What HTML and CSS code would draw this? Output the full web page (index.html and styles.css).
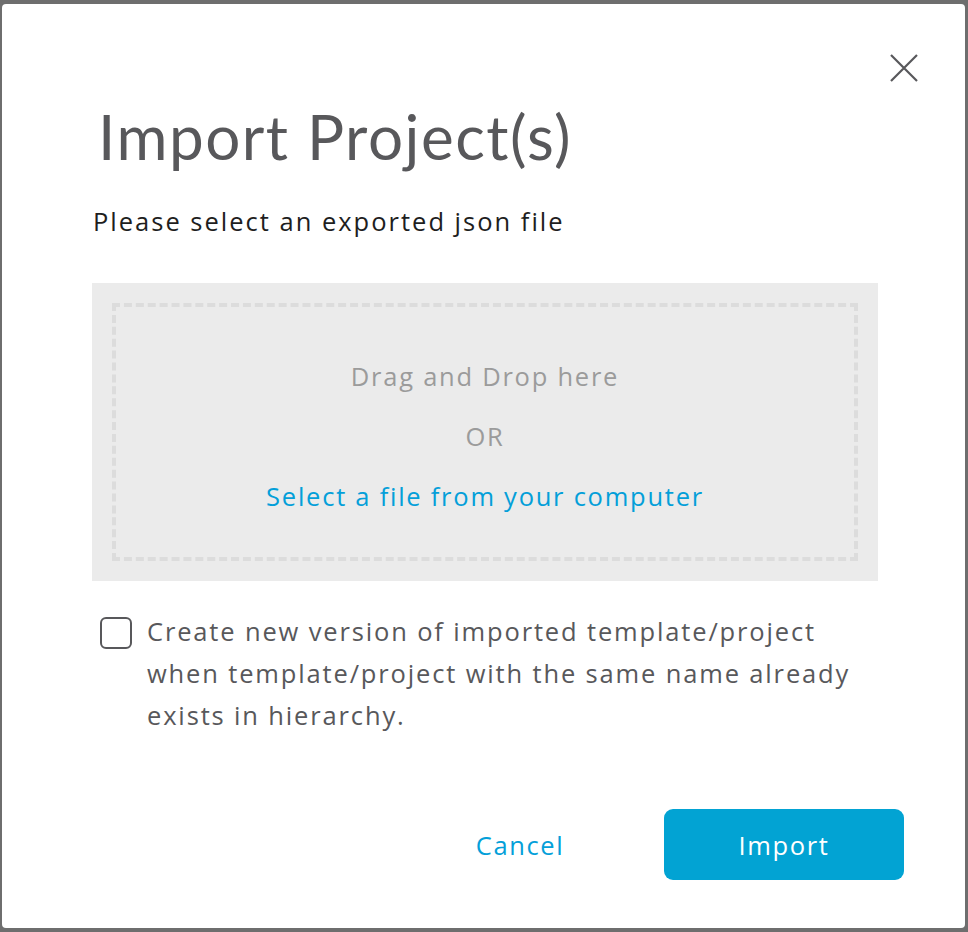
FILE: index.html
```html
<!DOCTYPE html>
<html>
<head>
<meta charset="utf-8">
<link rel="stylesheet" href="styles.css">
</head>
<body>
<div class="modal">
  <button class="close" aria-label="Close">
    <svg width="30" height="30" viewBox="0 0 30 30"><path d="M2 2L28 28M28 2L2 28" stroke="#58585b" stroke-width="2.2" fill="none"/></svg>
  </button>
  <h1 class="title">Import Project(s)</h1>
  <p class="subtitle">Please select an exported json file</p>
  <div class="dropzone">
    <div class="dropzone-inner">
      <div class="dz-text">Drag and Drop here</div>
      <div class="dz-or">OR</div>
      <div class="dz-link">Select a file from your computer</div>
    </div>
  </div>
  <label class="check-row">
    <span class="checkbox"></span>
    <span class="check-text">Create new version of imported template/project when template/project with the same name already exists in hierarchy.</span>
  </label>
  <div class="actions">
    <button class="btn-cancel">Cancel</button>
    <button class="btn-import">Import</button>
  </div>
</div>
</body>
</html>
```
FILE: styles.css
```css
html, body {
  margin: 0;
  padding: 0;
}
body {
  background: #6e6e6e;
  width: 968px;
  height: 932px;
  overflow: hidden;
  font-family: "Open Sans", Lato, sans-serif;
}
.modal {
  position: relative;
  margin: 4px 3px 0 2px;
  width: 963px;
  height: 924px;
  background: #fff;
  border-radius: 4px;
  box-sizing: border-box;
  padding: 86px 87px 0 90px;
}
.close {
  position: absolute;
  top: 49px;
  right: 46px;
  width: 30px;
  height: 30px;
  padding: 0;
  border: 0;
  background: none;
}
.close svg { display: block; }
.title {
  margin: 0 0 0 6px;
  font-family: Lato, "Open Sans", sans-serif;
  font-weight: 400;
  font-size: 62px;
  line-height: 92px;
  color: #58585b;
  letter-spacing: 1.5px;
}
.subtitle {
  margin: 23px 0 0 1px;
  font-size: 25.5px;
  line-height: 32px;
  color: #1e1e1e;
  letter-spacing: 2px;
}
.dropzone {
  margin-top: 46px;
  background: #ebebeb;
  padding: 20px;
  height: 298px;
  box-sizing: border-box;
}
.dropzone-inner {
  height: 100%;
  box-sizing: border-box;
  border: 4px dashed #dcdcdc;
  display: flex;
  flex-direction: column;
  align-items: center;
  justify-content: center;
  gap: 28px;
  padding-top: 8px;
  font-size: 25.5px;
  line-height: 32px;
  letter-spacing: 1.75px;
}
.dz-text, .dz-or { color: #9b9b9b; }
.dz-link { color: #049fd9; }
.check-row {
  display: flex;
  align-items: flex-start;
  margin-top: 36px;
  margin-left: 8px;
}
.checkbox {
  flex: none;
  width: 28px;
  height: 28px;
  border: 2px solid #58585b;
  border-radius: 6px;
  margin-top: 0;
}
.check-text {
  margin-left: 15px;
  font-size: 25.5px;
  line-height: 42px;
  margin-top: -7px;
  color: #58585b;
  letter-spacing: 1.85px;
  width: 712px;
}
.actions {
  display: flex;
  justify-content: flex-end;
  align-items: center;
  margin-top: 73px;
}
.btn-cancel {
  background: none;
  border: 0;
  font-family: inherit;
  font-size: 25.5px;
  color: #049fd9;
  letter-spacing: 1.6px;
  width: 240px;
  height: 71px;
  margin-right: 24px;
}
.btn-import {
  background: #02a3d3;
  border: 0;
  border-radius: 9px;
  font-family: inherit;
  font-size: 25.5px;
  color: #fff;
  letter-spacing: 1.6px;
  width: 240px;
  height: 71px;
  margin-right: -26px;
}
```
